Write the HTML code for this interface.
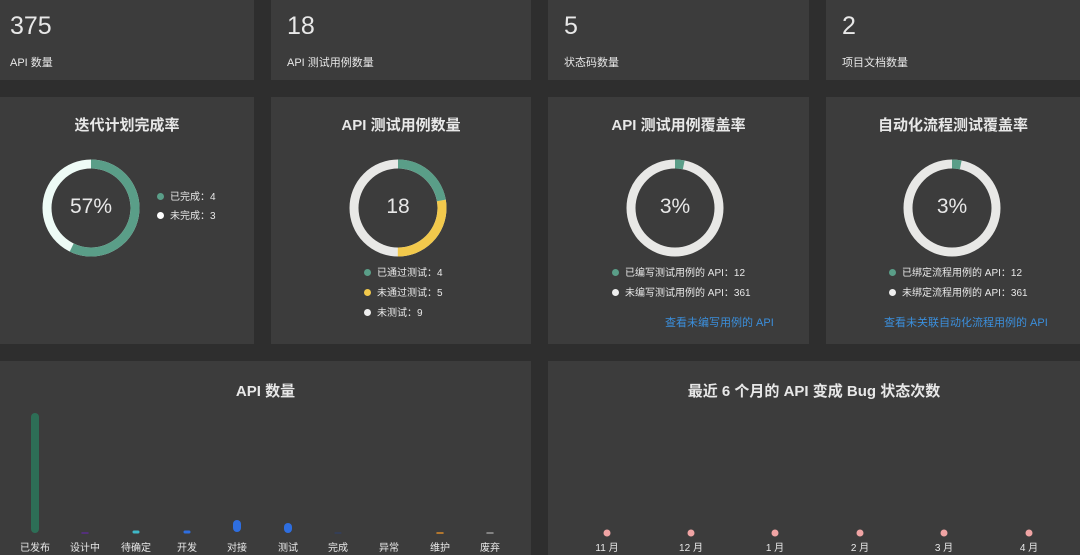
<!DOCTYPE html><html><head><meta charset="utf-8"><style>
body{margin:0;width:1080px;height:555px;background:#2e2e2e;position:relative;overflow:hidden;font-family:"Liberation Sans","Noto Sans CJK SC",sans-serif;color:#e8e8e8}
.c{position:absolute;background:#3c3c3c}
.n{position:absolute;left:10px;top:11px;font-size:25px;line-height:30px}
.l{position:absolute;left:10px;top:54px;font-size:11px}
.t{position:absolute;left:0;right:0;text-align:center;font-size:15px;font-weight:bold}
.a{position:absolute;font-size:10px;white-space:nowrap;line-height:12px}
.a i{display:inline-block;width:7px;height:7px;border-radius:50%;margin-right:6px;vertical-align:0}
.lk{position:absolute;color:#3b8fdc;font-size:11px;white-space:nowrap}
.x{position:absolute;font-size:10px;width:50px;text-align:center;top:539px}
.ctr{position:absolute;font-size:21px;width:100px;text-align:center;top:195px}
</style></head><body>
<div class="c" style="left:0;top:0;width:254px;height:80px"><div class="n">375</div><div class="l">API 数量</div></div>
<div class="c" style="left:271px;top:0;width:260px;height:80px"><div class="n" style="left:16px">18</div><div class="l" style="left:16px">API 测试用例数量</div></div>
<div class="c" style="left:548px;top:0;width:261px;height:80px"><div class="n" style="left:16px">5</div><div class="l" style="left:16px">状态码数量</div></div>
<div class="c" style="left:826px;top:0;width:254px;height:80px"><div class="n" style="left:16px">2</div><div class="l" style="left:16px">项目文档数量</div></div>

<div class="c" style="left:0;top:97px;width:254px;height:247px"><div class="t" style="top:17px">迭代计划完成率</div></div>
<div class="c" style="left:271px;top:97px;width:260px;height:247px"><div class="t" style="top:17px">API 测试用例数量</div></div>
<div class="c" style="left:548px;top:97px;width:261px;height:247px"><div class="t" style="top:17px">API 测试用例覆盖率</div></div>
<div class="c" style="left:826px;top:97px;width:254px;height:247px"><div class="t" style="top:17px">自动化流程测试覆盖率</div></div>

<div class="c" style="left:0;top:361px;width:531px;height:194px"><div class="t" style="top:19px">API 数量</div></div>
<div class="c" style="left:548px;top:361px;width:532px;height:194px"><div class="t" style="top:19px">最近 6 个月的 API 变成 Bug 状态次数</div></div>

<svg style="position:absolute;left:0;top:0" width="1080" height="555">
<g fill="none" stroke-width="9">
<circle cx="91" cy="208" r="44" stroke="#eefbf6"/>
<circle cx="91" cy="208" r="44" stroke="#5a9e88" stroke-dasharray="158 500" transform="rotate(-90 91 208)"/>
<circle cx="398" cy="208" r="44" stroke="#e8e8e6"/>
<circle cx="398" cy="208" r="44" stroke="#f2c94c" stroke-dasharray="0 61.4 76.8 500" transform="rotate(-90 398 208)"/>
<circle cx="398" cy="208" r="44" stroke="#5a9e88" stroke-dasharray="61.4 500" transform="rotate(-90 398 208)"/>
<circle cx="675" cy="208" r="44" stroke="#e8e8e6"/>
<circle cx="675" cy="208" r="44" stroke="#5a9e88" stroke-dasharray="8.8 500" transform="rotate(-90 675 208)"/>
<circle cx="952" cy="208" r="44" stroke="#e8e8e6"/>
<circle cx="952" cy="208" r="44" stroke="#5a9e88" stroke-dasharray="8.8 500" transform="rotate(-90 952 208)"/>
</g>
<g stroke-linecap="round">
<line x1="35" y1="417" x2="35" y2="529" stroke="#2d6e56" stroke-width="8"/>
<line x1="82" y1="533" x2="88" y2="533" stroke="#5b2d8e" stroke-width="1.5"/>
<line x1="134" y1="532" x2="138" y2="532" stroke="#3fb8c8" stroke-width="3"/>
<line x1="185" y1="532" x2="189" y2="532" stroke="#2e6ee0" stroke-width="3"/>
<line x1="237" y1="524" x2="237" y2="528" stroke="#2e6ee0" stroke-width="8"/>
<line x1="288" y1="527" x2="288" y2="529" stroke="#2e6ee0" stroke-width="8"/>
<line x1="335" y1="533" x2="341" y2="533" stroke="#2d3f70" stroke-width="1"/>
<line x1="437" y1="533" x2="443" y2="533" stroke="#d88a2a" stroke-width="1.5"/>
<line x1="487" y1="533" x2="493" y2="533" stroke="#999" stroke-width="1.5"/>
</g>
<g fill="#f0a4a4"><circle cx="607" cy="533" r="3.5"/><circle cx="691" cy="533" r="3.5"/><circle cx="775" cy="533" r="3.5"/><circle cx="860" cy="533" r="3.5"/><circle cx="944" cy="533" r="3.5"/><circle cx="1029" cy="533" r="3.5"/></g>
</svg>
<div class="ctr" style="left:41px">57%</div>
<div class="ctr" style="left:348px">18</div>
<div class="ctr" style="left:625px">3%</div>
<div class="ctr" style="left:902px">3%</div>

<div class="a" style="left:157px;top:192px"><i style="background:#5a9e88"></i>已完成：4</div>
<div class="a" style="left:157px;top:211px"><i style="background:#fff"></i>未完成：3</div>
<div class="a" style="left:364px;top:268px"><i style="background:#5a9e88"></i>已通过测试：4</div>
<div class="a" style="left:364px;top:288px"><i style="background:#f2c94c"></i>未通过测试：5</div>
<div class="a" style="left:364px;top:308px"><i style="background:#eee"></i>未测试：9</div>
<div class="a" style="left:612px;top:268px"><i style="background:#5a9e88"></i>已编写测试用例的 API：12</div>
<div class="a" style="left:612px;top:288px"><i style="background:#eee"></i>未编写测试用例的 API：361</div>
<div class="a" style="left:889px;top:268px"><i style="background:#5a9e88"></i>已绑定流程用例的 API：12</div>
<div class="a" style="left:889px;top:288px"><i style="background:#eee"></i>未绑定流程用例的 API：361</div>
<div class="lk" style="left:665px;top:314px">查看未编写用例的 API</div>
<div class="lk" style="left:884px;top:314px">查看未关联自动化流程用例的 API</div>

<div class="x" style="left:10px">已发布</div><div class="x" style="left:60px">设计中</div><div class="x" style="left:111px">待确定</div><div class="x" style="left:162px">开发</div><div class="x" style="left:212px">对接</div><div class="x" style="left:263px">测试</div><div class="x" style="left:313px">完成</div><div class="x" style="left:364px">异常</div><div class="x" style="left:415px">维护</div><div class="x" style="left:465px">废弃</div>
<div class="x" style="left:582px">11 月</div><div class="x" style="left:666px">12 月</div><div class="x" style="left:750px">1 月</div><div class="x" style="left:835px">2 月</div><div class="x" style="left:919px">3 月</div><div class="x" style="left:1004px">4 月</div>
</body></html>
